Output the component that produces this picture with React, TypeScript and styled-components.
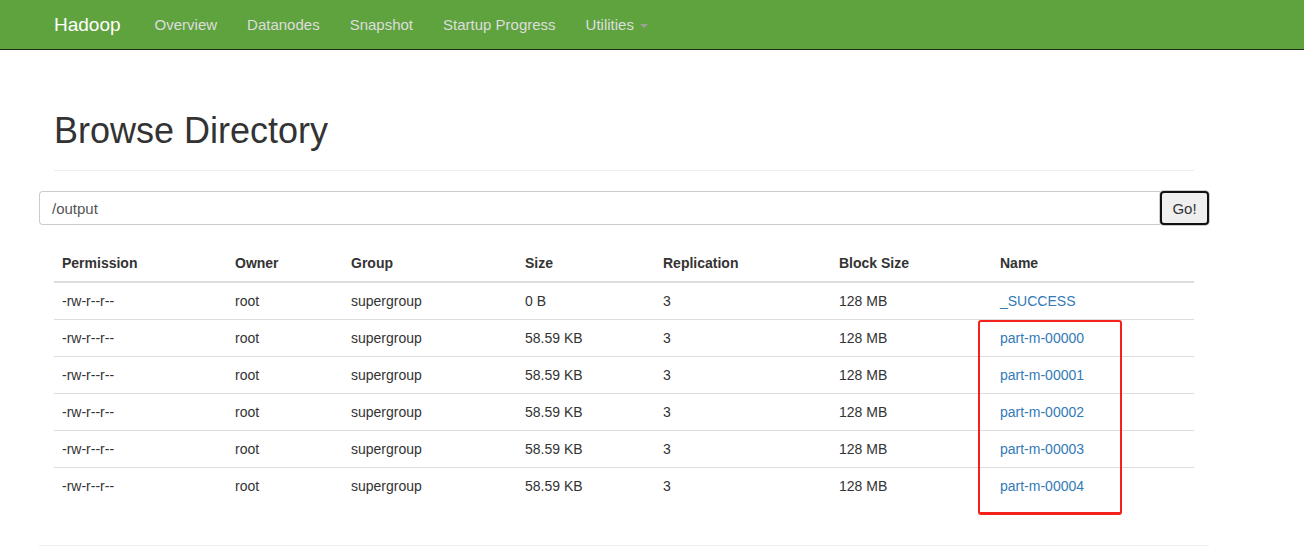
import React, { ReactElement } from "react";
import styled, { createGlobalStyle } from "styled-components";

const GlobalStyle = createGlobalStyle`
  html, body {
    margin: 0;
    padding: 0;
    background: #fff;
    font-family: "Liberation Sans", Arial, sans-serif;
    font-size: 14px;
    color: #333;
  }
`;

const NavBar = styled.nav`
  height: 49px;
  background-color: #5fa33e;
  border-bottom: 1px solid #1f2a1a;
`;
const NavInner = styled.div`
  width: 1170px;
  margin-left: 39px;
  padding: 0 15px;
  box-sizing: border-box;
  display: flex;
  align-items: center;
  height: 100%;
`;
const Brand = styled.a`
  font-size: 19px;
  color: #fff;
  padding-right: 19px;
  text-decoration: none;
`;
const NavLink = styled.a`
  font-size: 15px;
  color: #ddd;
  padding: 0 15px;
  text-decoration: none;
  display: flex;
  align-items: center;
`;
const Caret = styled.span`
  display: inline-block;
  width: 0;
  height: 0;
  margin-left: 6px;
  margin-top: 2px;
  border-top: 4px solid #9aa094;
  border-left: 4px solid transparent;
  border-right: 4px solid transparent;
`;

const Container = styled.div`
  width: 1170px;
  margin-left: 39px;
  box-sizing: border-box;
`;
const PageHeader = styled.div`
  margin: 0 15px;
  padding-top: 61px;
  padding-bottom: 19px;
  border-bottom: 1px solid #eee;
`;
const Title = styled.h1`
  margin: 0;
  font-size: 36px;
  font-weight: 400;
  line-height: 40px;
  color: #333;
`;
const SearchRow = styled.form`
  display: flex;
  margin-top: 20px;
  height: 34px;
`;
const PathInput = styled.input`
  flex: 1;
  height: 34px;
  box-sizing: border-box;
  border: 1px solid #ccc;
  border-right: none;
  border-radius: 4px 0 0 4px;
  padding: 0 12px;
  font-family: "Liberation Sans", Arial, sans-serif;
  font-size: 15px;
  color: #555;
  outline: none;
`;
const GoButton = styled.button`
  width: 49px;
  height: 34px;
  box-sizing: border-box;
  border: 2px solid #111;
  border-radius: 4px;
  background: #efefef;
  font-family: "Liberation Sans", Arial, sans-serif;
  font-size: 15px;
  color: #333;
  box-shadow: 0 0 0 1px #ccc;
`;

const TableWrap = styled.div`
  position: relative;
  margin: 20px 15px 0;
`;
const Table = styled.table`
  width: 100%;
  border-collapse: collapse;
  font-size: 14px;
`;
const Th = styled.th<{ $width?: number }>`
  text-align: left;
  font-weight: 700;
  padding: 8px 8px;
  height: 20px;
  line-height: 20px;
  border-bottom: 2px solid #ddd;
  color: #333;
  ${p => (p.$width ? `width: ${p.$width - 16}px;` : "")}
`;
const Td = styled.td`
  padding: 8px 8px;
  line-height: 20px;
  border-top: 1px solid #ddd;
  color: #333;
`;
const FileLink = styled.a`
  color: #337ab7;
  text-decoration: none;
`;
const Highlight = styled.div`
  position: absolute;
  left: 924px;
  top: 75px;
  width: 140px;
  height: 190px;
  border: 2px solid #f5221b;
  border-bottom-width: 3px;
  border-radius: 3px;
  pointer-events: none;
`;
const Footer = styled.hr`
  margin: 41px 0 0;
  border: none;
  border-top: 1px solid #eee;
`;

const columns = [
  { label: "Permission", width: 173 },
  { label: "Owner", width: 116 },
  { label: "Group", width: 174 },
  { label: "Size", width: 138 },
  { label: "Replication", width: 176 },
  { label: "Block Size", width: 161 },
  { label: "Name" },
];

const files = [
  { size: "0 B", name: "_SUCCESS" },
  { size: "58.59 KB", name: "part-m-00000" },
  { size: "58.59 KB", name: "part-m-00001" },
  { size: "58.59 KB", name: "part-m-00002" },
  { size: "58.59 KB", name: "part-m-00003" },
  { size: "58.59 KB", name: "part-m-00004" },
];

const App = (): ReactElement => {
  return (
    <>
      <GlobalStyle />
      <NavBar>
        <NavInner>
          <Brand href="#">Hadoop</Brand>
          <NavLink href="#">Overview</NavLink>
          <NavLink href="#">Datanodes</NavLink>
          <NavLink href="#">Snapshot</NavLink>
          <NavLink href="#">Startup Progress</NavLink>
          <NavLink href="#">
            Utilities
            <Caret />
          </NavLink>
        </NavInner>
      </NavBar>
      <Container>
        <PageHeader>
          <Title>Browse Directory</Title>
        </PageHeader>
        <SearchRow onSubmit={e => e.preventDefault()}>
          <PathInput defaultValue="/output" />
          <GoButton type="submit">Go!</GoButton>
        </SearchRow>
        <TableWrap>
          <Table>
            <thead>
              <tr>
                {columns.map(col => (
                  <Th key={col.label} $width={col.width}>
                    {col.label}
                  </Th>
                ))}
              </tr>
            </thead>
            <tbody>
              {files.map(file => (
                <tr key={file.name}>
                  <Td>-rw-r--r--</Td>
                  <Td>root</Td>
                  <Td>supergroup</Td>
                  <Td>{file.size}</Td>
                  <Td>3</Td>
                  <Td>128 MB</Td>
                  <Td>
                    <FileLink href="#">{file.name}</FileLink>
                  </Td>
                </tr>
              ))}
            </tbody>
          </Table>
          <Highlight />
        </TableWrap>
        <Footer />
      </Container>
    </>
  );
};

export default App;
